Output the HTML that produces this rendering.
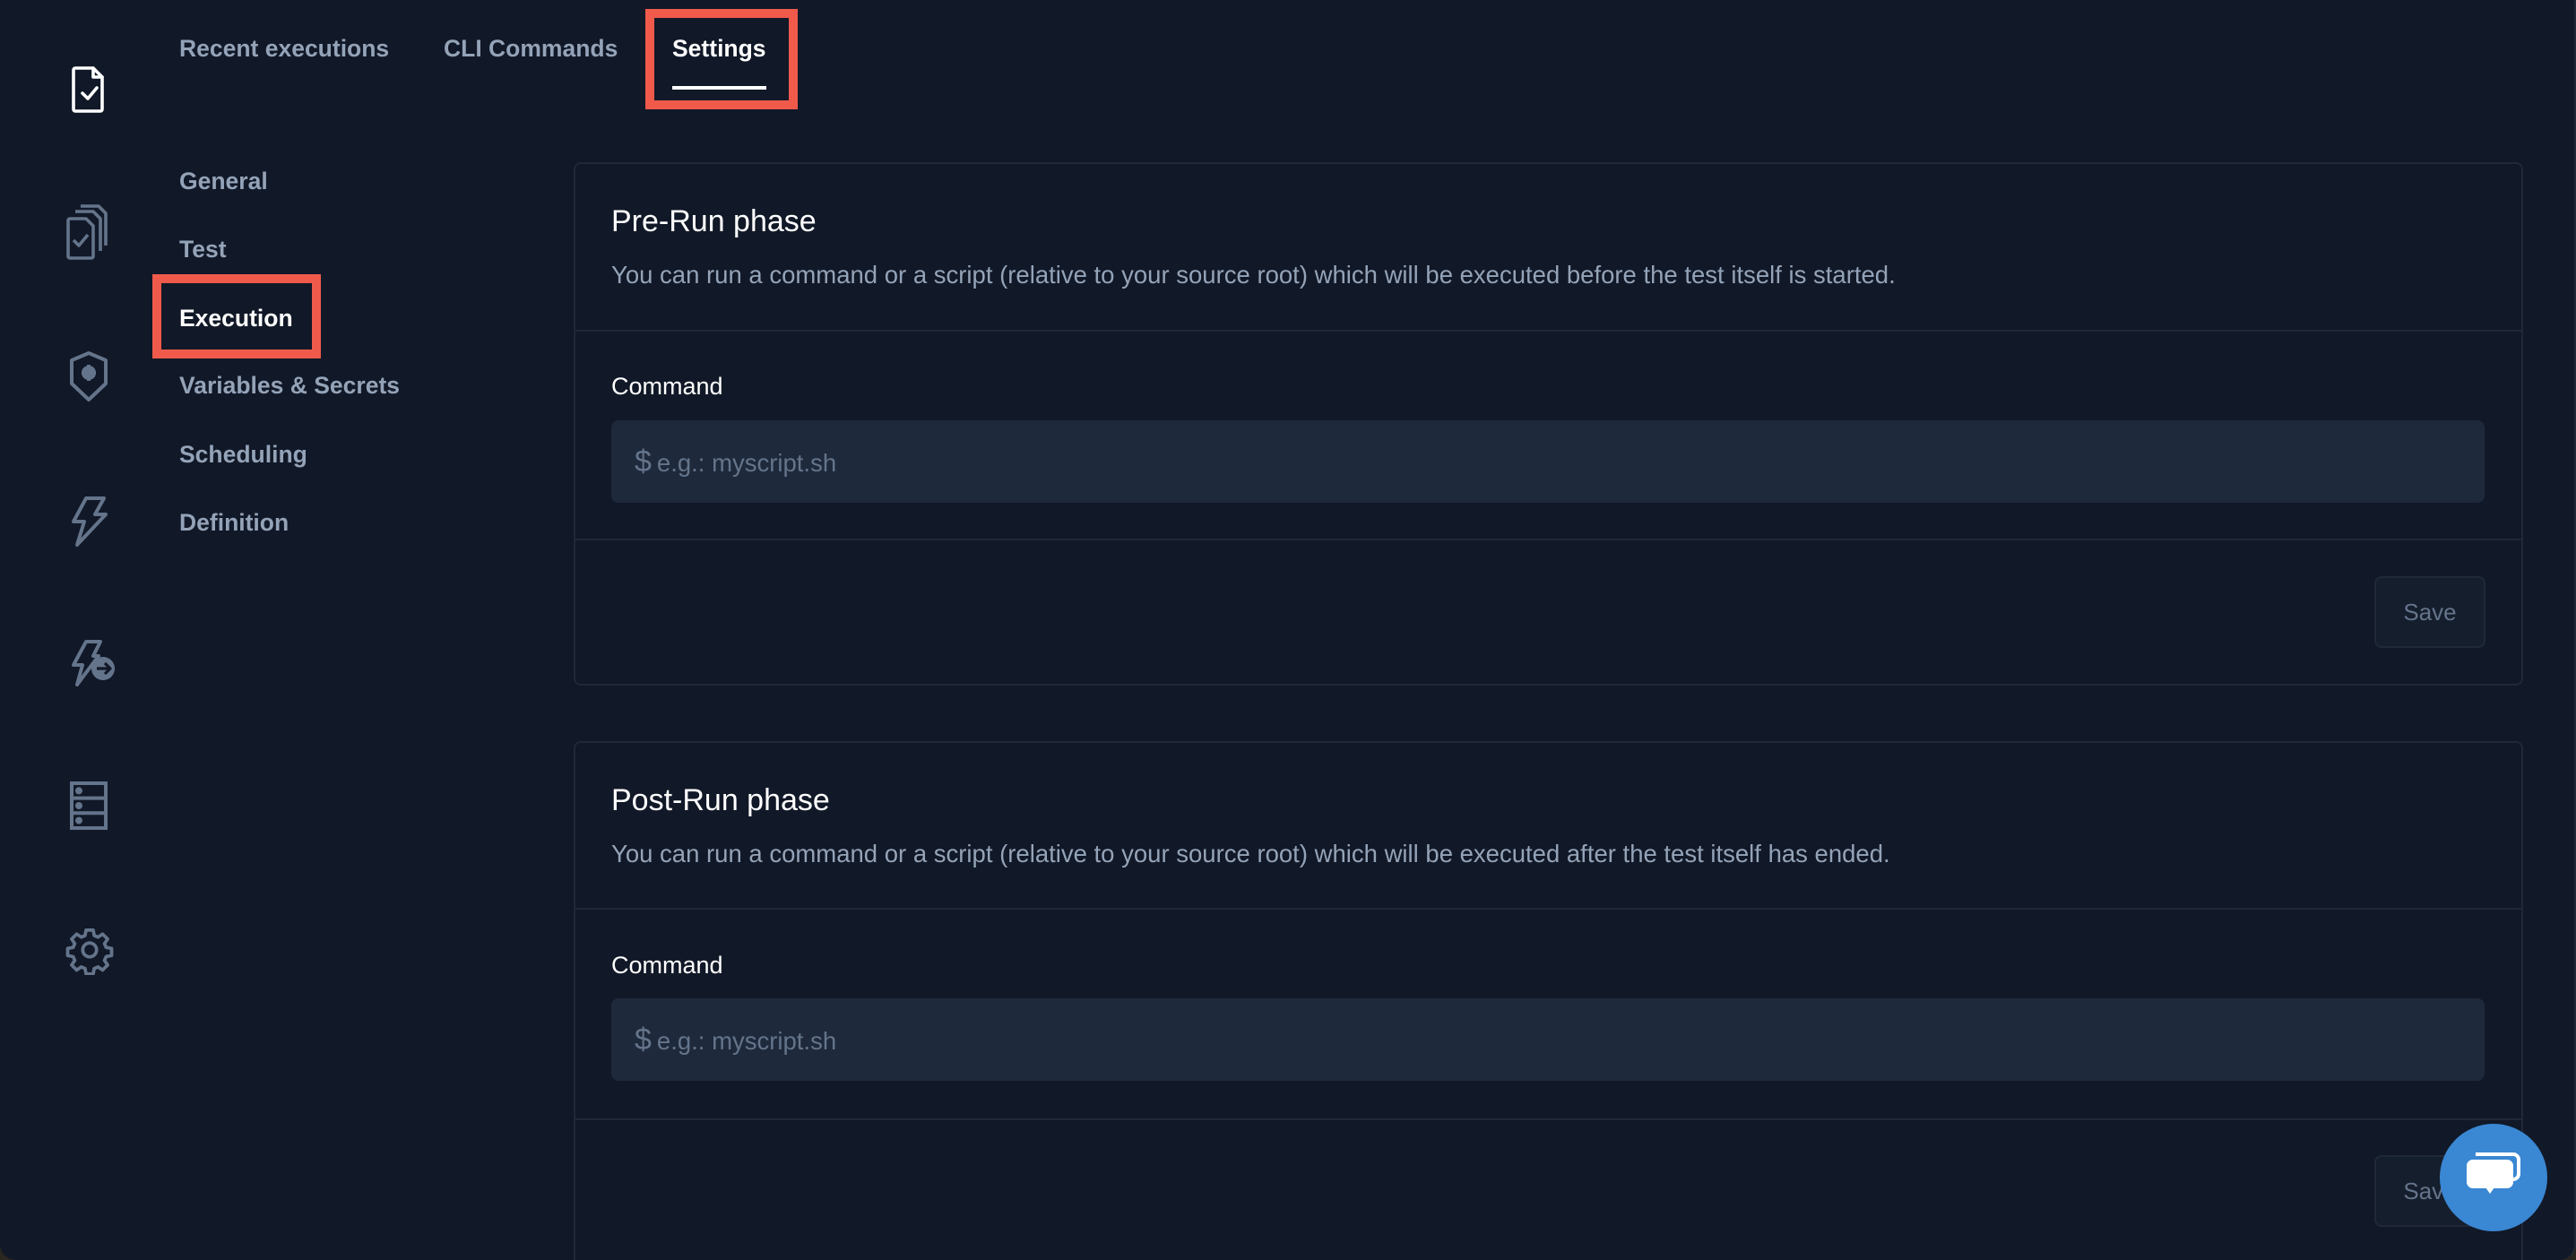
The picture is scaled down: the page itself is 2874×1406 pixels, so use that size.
<!DOCTYPE html>
<html><head><meta charset="utf-8"><style>
*{box-sizing:border-box;margin:0;padding:0}
html,body{width:2874px;height:1406px;overflow:hidden;background:#2a2620}
body{font-family:"Liberation Sans",sans-serif;position:relative}
.frame{position:absolute;left:0;top:0;width:2874px;height:1406px;background:#111827;border-radius:0 0 18px 18px;border-right:2px solid #1f2937}
.abs{position:absolute}
.tab{position:absolute;top:39px;font-size:26.5px;font-weight:bold;color:#94a3b8;white-space:nowrap}
.nav{position:absolute;left:200px;font-size:26.5px;font-weight:bold;color:#94a3b8;white-space:nowrap;line-height:32px}
.red{position:absolute;border:10px solid #f05a4b}
.card{position:absolute;left:640px;width:2175px;border:2px solid #1f2937;border-radius:8px}
.hr{position:absolute;left:0;right:0;height:2px;background:#1f2937}
.title{position:absolute;left:40px;font-size:34px;color:#fff;white-space:nowrap}
.desc{position:absolute;left:40px;font-size:27.5px;color:#94a3b8;white-space:nowrap}
.lbl{position:absolute;left:40px;font-size:27px;color:#fff}
.inp{position:absolute;left:40px;width:2090px;height:92px;background:#1e293b;border-radius:8px;font-size:27.5px;color:#64748b;padding-left:26px;line-height:92px}
.inp b{font-weight:normal;font-size:34px;margin-right:6px}
.save{position:absolute;left:2007px;width:124px;height:80px;border:2px solid #1f2937;background:#151e2c;border-radius:8px;color:#64748b;font-size:26px;text-align:center;line-height:76px}
svg{position:absolute}
</style></head><body>
<div class="frame">
<svg style="left:76px;top:72px" width="48" height="56" viewBox="0 0 24 28" fill="none" stroke="#fff" stroke-width="1.8" stroke-linejoin="round" stroke-linecap="round"><path d="M4 2h10l5 5v18a1 1 0 0 1-1 1H4a1 1 0 0 1-1-1V3a1 1 0 0 1 1-1z"/><path d="M14 2v5h5"/><path d="M8 16l3 3 5-6"/></svg>
<svg style="left:70px;top:226px" width="60" height="66" viewBox="0 0 30 33" fill="none" stroke="#64748b" stroke-width="1.8" stroke-linejoin="round"><path d="M10 2h10l4 4v18"/><path d="M7 5h10l4 4v18"/><path d="M4 9h9l4 4v17a1 1 0 0 1-1 1H4a1 1 0 0 1-1-1V10a1 1 0 0 1 1-1z"/><path d="M6 21l3 3 5-6"/></svg>
<svg style="left:74px;top:390px" width="50" height="60" viewBox="0 0 25 30" fill="none" stroke="#64748b" stroke-width="2" stroke-linejoin="round"><path d="M12.5 2l9.5 4v13l-9.5 9L3 19V6z"/><circle cx="12.5" cy="13" r="3" fill="#64748b"/><path d="M12.5 8.5v2M12.5 15.5v2M8.5 13h2M14.5 13h2M9.7 10.2l1.4 1.4M13.9 14.4l1.4 1.4M9.7 15.8l1.4-1.4M13.9 11.6l1.4-1.4"/></svg>
<svg style="left:76px;top:552px" width="46" height="60" viewBox="0 0 23 30" fill="none" stroke="#64748b" stroke-width="2" stroke-linejoin="round"><path d="M10 2h10l-5 9h6L5 28l4-13H3z"/></svg>
<svg style="left:76px;top:712px" width="56" height="56" viewBox="0 0 28 28" fill="none" stroke="#64748b" stroke-width="2" stroke-linejoin="round"><path d="M10 2h8l-4 8h3L5 26l3-11H3z"/><circle cx="19.5" cy="17" r="6.5" fill="#64748b" stroke="none"/><path d="M16 17h7M20.5 14l3 3-3 3" stroke="#111827" stroke-width="1.6"/></svg>
<svg style="left:76px;top:870px" width="46" height="58" viewBox="0 0 23 29" fill="none" stroke="#64748b" stroke-width="2"><rect x="2" y="2" width="19" height="25"/><path d="M2 10.3h19M2 18.6h19"/><circle cx="6" cy="6.2" r="1" fill="#64748b"/><circle cx="6" cy="14.5" r="1" fill="#64748b"/><circle cx="6" cy="22.8" r="1" fill="#64748b"/></svg>
<svg style="left:72px;top:1032px" width="56" height="56" viewBox="0 0 24 24" fill="none" stroke="#64748b" stroke-width="1.6" stroke-linejoin="round"><path d="M10.3 2.5h3.4l.5 2.6 1.8.8 2.2-1.5 2.4 2.4-1.5 2.2.8 1.8 2.6.5v3.4l-2.6.5-.8 1.8 1.5 2.2-2.4 2.4-2.2-1.5-1.8.8-.5 2.6h-3.4l-.5-2.6-1.8-.8-2.2 1.5-2.4-2.4 1.5-2.2-.8-1.8-2.6-.5v-3.4l2.6-.5.8-1.8-1.5-2.2 2.4-2.4 2.2 1.5 1.8-.8z"/><circle cx="12" cy="12" r="3.3"/></svg>

<div class="tab" style="left:200px">Recent executions</div>
<div class="tab" style="left:495px">CLI Commands</div>
<div class="tab" style="left:750px;color:#fff">Settings</div>
<div class="abs" style="left:750px;top:96px;width:105px;height:4px;background:#fff"></div>
<div class="red" style="left:720px;top:10px;width:170px;height:112px"></div>

<div class="nav" style="top:186px">General</div>
<div class="nav" style="top:262px">Test</div>
<div class="nav" style="top:339px;color:#fff">Execution</div>
<div class="nav" style="top:414px">Variables &amp; Secrets</div>
<div class="nav" style="top:491px">Scheduling</div>
<div class="nav" style="top:567px">Definition</div>
<div class="red" style="left:170px;top:306px;width:188px;height:94px"></div>

<div class="card" style="top:181px;height:584px">
<div class="title" style="top:45px">Pre-Run phase</div>
<div class="desc" style="top:108px">You can run a command or a script (relative to your source root) which will be executed before the test itself is started.</div>
<div class="hr" style="top:185px"></div>
<div class="lbl" style="top:233px">Command</div>
<div class="inp" style="top:286px"><b>$</b>e.g.: myscript.sh</div>
<div class="hr" style="top:418px"></div>
<div class="save" style="top:460px">Save</div>
</div>

<div class="card" style="top:827px;height:620px">
<div class="title" style="top:45px">Post-Run phase</div>
<div class="desc" style="top:108px">You can run a command or a script (relative to your source root) which will be executed after the test itself has ended.</div>
<div class="hr" style="top:184px"></div>
<div class="lbl" style="top:233px">Command</div>
<div class="inp" style="top:285px"><b>$</b>e.g.: myscript.sh</div>
<div class="hr" style="top:419px"></div>
<div class="save" style="top:460px">Save</div>
</div>

<div class="abs" style="left:2722px;top:1254px;width:120px;height:120px;border-radius:50%;background:#3a87d3"></div>
<svg style="left:2748px;top:1282px" width="68" height="64" viewBox="0 0 68 64"><path d="M14 6h42a6 6 0 0 1 6 6v16a6 6 0 0 1-6 6" fill="none" stroke="#fff" stroke-width="4"/><rect x="4" y="12" width="52" height="32" rx="7" fill="#fff"/><path d="M25 43l5 7 5-7z" fill="#fff"/></svg>
</div>
</body></html>
